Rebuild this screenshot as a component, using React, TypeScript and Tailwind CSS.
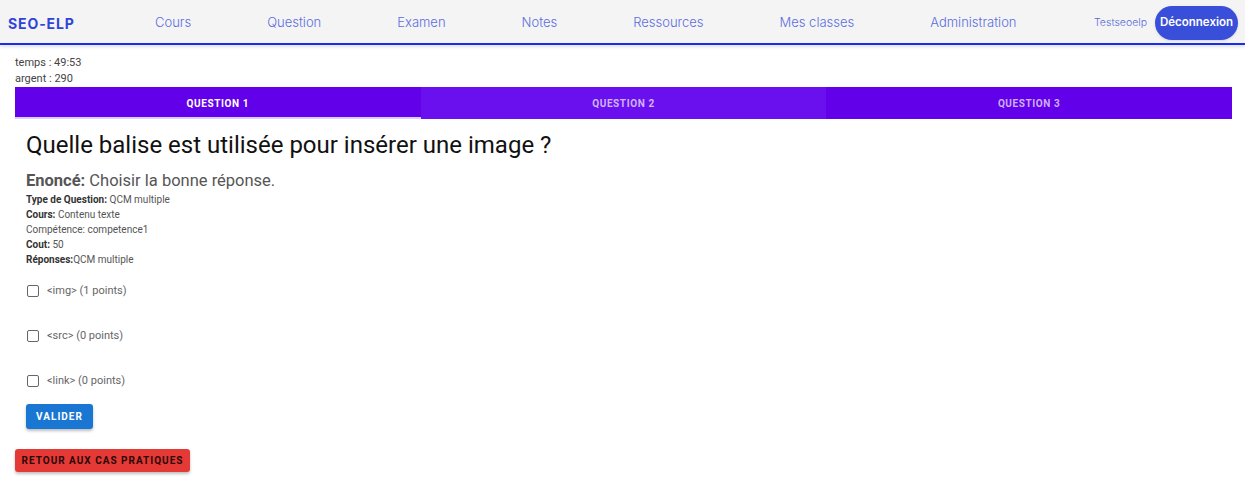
const navLinks = ["Cours", "Question", "Examen", "Notes", "Ressources", "Mes classes", "Administration"];

const answers = [
    {label: "<img>", points: 1},
    {label: "<src>", points: 0},
    {label: "<link>", points: 0},
];

export default function App() {
    return (
        <div className="min-h-[481px] bg-white font-['Roboto',sans-serif]">

            {/* Navbar */}
            <nav className="h-[45px] bg-[#f4f4f4] border-b-2 border-[#1a2cf0] shadow-[0_2px_3px_rgba(0,0,0,0.12)] flex items-center pt-[3px] pl-[8px] pr-[7px] font-['Inter',sans-serif]">
                <span className="w-[71px] text-[14px] font-bold tracking-[0.9px] text-[#2f45d8]">SEO-ELP</span>
                <ul className="flex items-center gap-[76px] ml-[76px]">
                    {navLinks.map(link => (
                        <li key={link} className="text-[13px] font-light text-[#5b6ee0]">{link}</li>
                    ))}
                </ul>
                <div className="ml-auto flex items-center gap-[8px]">
                    <span className="text-[10.5px] text-[#5a6bd8] font-light">Testseoelp</span>
                    <button className="h-[34px] w-[83px] rounded-full bg-[#3a4fd9] text-white text-[11.5px] font-semibold shadow-sm">
                        Déconnexion
                    </button>
                </div>
            </nav>

            <main className="pl-[15px] pr-[13px] pt-[10px]">
                <div className="text-[11px] leading-[16px] text-[#444]">
                    <p>temps : 49:53</p>
                    <p>argent : 290</p>
                </div>

                {/* Tabs */}
                <div className="grid grid-cols-3 h-[32px] bg-[#6200ea]">
                    <div className="relative flex items-center justify-center text-[10px] font-bold tracking-[0.6px] text-white">
                        QUESTION 1
                        <span className="absolute left-0 right-0 bottom-0 h-[2px] bg-[#d9ccff]" />
                    </div>
                    <div className="flex items-center justify-center bg-[#6a10ee] text-[10px] font-bold tracking-[0.6px] text-white/70">
                        QUESTION 2
                    </div>
                    <div className="flex items-center justify-center text-[10px] font-bold tracking-[0.6px] text-white/70">
                        QUESTION 3
                    </div>
                </div>

                {/* Question panel */}
                <section className="pl-[11px] pt-[11px] pb-[9px]">
                    <h1 className="text-[24px] leading-[30px] text-[#111]">Quelle balise est utilisée pour insérer une image ?</h1>

                    <p className="mt-[11px] text-[16.5px] leading-[20px] text-[#555]">
                        <span className="font-bold">Enoncé:</span> Choisir la bonne réponse.
                    </p>
                    <div className="text-[10px] leading-[15px] text-[#555] mt-[1px]">
                        <p><span className="font-bold text-[#333]">Type de Question:</span> QCM multiple</p>
                        <p><span className="font-bold text-[#333]">Cours:</span> Contenu texte</p>
                        <p>Compétence: competence1</p>
                        <p><span className="font-bold text-[#333]">Cout:</span> 50</p>
                        <p><span className="font-bold text-[#333]">Réponses:</span>QCM multiple</p>
                    </div>

                    <div className="mt-[17px] flex flex-col gap-[31px]">
                        {answers.map(a => (
                            <label key={a.label} className="flex items-center gap-[8px] h-[14px] pl-[1px]">
                                <span className="w-[12px] h-[12px] border-[1.5px] border-[#666] rounded-[2px]" />
                                <span className="text-[11px] text-[#666]">{a.label} ({a.points} points)</span>
                            </label>
                        ))}
                    </div>

                    <button className="mt-[16px] h-[25px] w-[67px] rounded-[3px] bg-[#1976d2] text-white text-[10px] font-bold tracking-[1px] shadow-[0_2px_3px_rgba(0,0,0,0.25)]">
                        VALIDER
                    </button>
                </section>

                <button className="mt-[11px] h-[23px] w-[175px] rounded-[3px] bg-[#e53935] text-[#2b0808] text-[10px] font-bold tracking-[1px] shadow-[0_2px_3px_rgba(0,0,0,0.25)]">
                    RETOUR AUX CAS PRATIQUES
                </button>
            </main>
        </div>
    );
}
